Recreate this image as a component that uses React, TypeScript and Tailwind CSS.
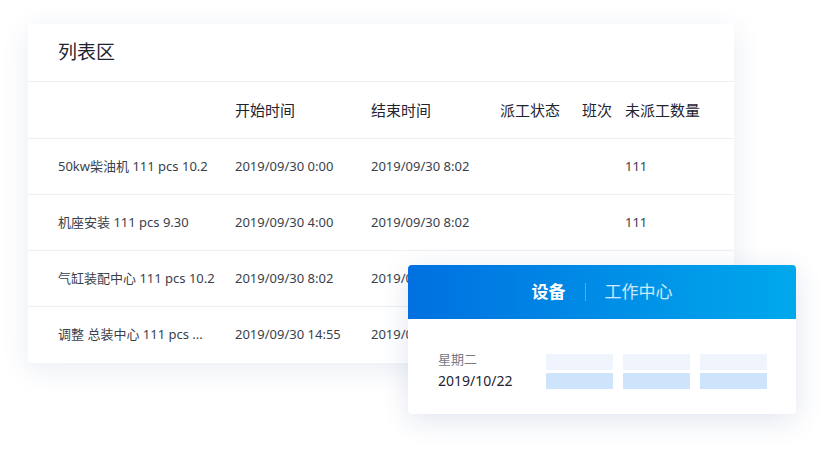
export default function App() {
  const rows = [
    ["50kw柴油机 111 pcs 10.2", "2019/09/30 0:00", "2019/09/30 8:02", "111"],
    ["机座安装 111 pcs 9.30", "2019/09/30 4:00", "2019/09/30 8:02", "111"],
    ["气缸装配中心 111 pcs 10.2", "2019/09/30 8:02", "2019/09/30 8:02", ""],
    ["调整 总装中心 111 pcs ...", "2019/09/30 14:55", "2019/09/30 8:02", ""],
  ];
  return (
    <div className="relative w-[834px] h-[457px] bg-white overflow-hidden" style={{ fontFamily: '"Noto Sans","Noto Sans CJK SC",sans-serif' }}>
      <div className="absolute left-[28px] top-[24px] w-[706px] bg-white rounded-[4px] shadow-[0_6px_28px_rgba(40,70,140,0.10)]">
        <div className="h-[58px] flex items-center pl-[30px] text-[19px] text-[#1f2330] border-b border-[#eef0f4]">列表区</div>
        <div className="h-[57px] flex items-center text-[15px] text-[#1f2330] border-b border-[#eef0f4]">
          <div className="w-[207px]" />
          <div className="w-[136px]">开始时间</div>
          <div className="w-[129px]">结束时间</div>
          <div className="w-[82px]">派工状态</div>
          <div className="w-[43px]">班次</div>
          <div>未派工数量</div>
        </div>
        {rows.map((r, i) => (
          <div key={i} className={`h-[56px] flex items-center text-[13px] text-[#3a3f4c] ${i < 3 ? "border-b border-[#eef0f4]" : ""}`}>
            <div className="w-[207px] pl-[30px] whitespace-nowrap">{r[0]}</div>
            <div className="w-[136px] whitespace-nowrap">{r[1]}</div>
            <div className="w-[254px] whitespace-nowrap">{r[2]}</div>
            <div>{r[3]}</div>
          </div>
        ))}
      </div>
      <div className="absolute left-[408px] top-[265px] w-[388px] h-[149px] bg-white rounded-[4px] overflow-hidden shadow-[0_6px_28px_rgba(40,70,140,0.14)]">
        <div className="h-[54px] flex items-center justify-center bg-gradient-to-r from-[#0270e0] to-[#02a8ec] text-[17px]">
          <span className="text-white font-bold">设备</span>
          <span className="mx-[19px] w-px h-[18px] bg-white/30" />
          <span className="text-white/80">工作中心</span>
        </div>
        <div className="flex items-center pt-[30px] pl-[30px]">
          <div className="w-[108px]">
            <div className="text-[13px] text-[#777b86] leading-[20px]">星期二</div>
            <div className="text-[14px] text-[#1f2330] leading-[24px]">2019/10/22</div>
          </div>
          <div className="flex gap-[10px]">
            {[0, 1, 2].map((k) => (
              <div key={k} className="flex flex-col gap-[3px]">
                <div className="w-[67px] h-[16px] bg-[#f0f5fd]" />
                <div className="w-[67px] h-[16px] bg-[#cde4fb]" />
              </div>
            ))}
          </div>
        </div>
      </div>
    </div>
  );
}
